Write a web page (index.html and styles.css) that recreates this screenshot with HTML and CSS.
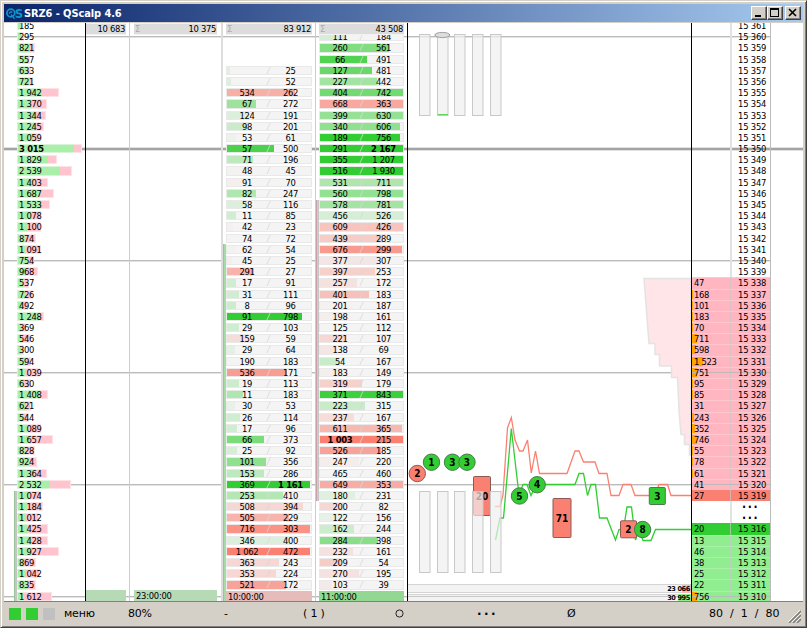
FILE: index.html
```html
<!DOCTYPE html>
<html lang="ru">
<head>
    <meta charset="UTF-8">
    <title>SRZ6 - QScalp 4.6</title>
    <link rel="stylesheet" href="styles.css">
</head>
<body>
    <div class="window">
        <div class="titlebar">
            <svg class="logo" width="17" height="15" viewBox="0 0 17 15">
                <circle cx="4.8" cy="7" r="3.9" fill="none" stroke="#0f96c8" stroke-width="1.7"/>
                <path d="M3 7.5 L5 5.5 L6.3 6.5 M5 8.5 L8.6 12.8" fill="none" stroke="#0f96c8" stroke-width="1.3"/>
                <text x="8.8" y="12" class="logo-text">S</text>
            </svg>
            <span class="title">SRZ6 - QScalp 4.6</span>
            <div class="buttons">
                <div class="btn"><svg width="14" height="12"><rect x="3" y="8" width="6" height="2"/></svg></div>
                <div class="btn"><svg width="14" height="12"><path d="M2 1h9v9h-9z M3 3v6h7v-6z" fill-rule="evenodd"/></svg></div>
                <div class="btn btn-close"><svg width="14" height="12"><path d="M3 2l7 7M10 2l-7 7" stroke="#000" stroke-width="1.6"/></svg></div>
            </div>
        </div>

        <div class="content">
            <div class="volumes"><div class="trend trend-volumes"></div><div class="rows" id="volumes"></div></div>
            <div class="cluster cluster-cut">
                <div class="head">10 683</div>
                <div class="foot foot-pale"></div>
            </div>
            <div class="cluster cluster-a">
                <div class="head"><i>Σ</i>10 375</div>
                <div class="foot foot-pale">23:00:00</div>
            </div>
            <div class="cluster cluster-b">
                <div class="trend trend-b"></div>
                <div class="head"><i>Σ</i>83 912</div>
                <div class="rows" id="clusterB"></div>
                <div class="foot foot-red">10:00:00</div>
            </div>
            <div class="cluster cluster-c">
                <div class="trend trend-c"></div>
                <div class="head"><i>Σ</i>43 508</div>
                <div class="rows" id="clusterC"></div>
                <div class="foot foot-green">11:00:00</div>
            </div>
            <div class="chart">
                <svg width="283" height="578" viewBox="408 23 283 578">
                    <!-- cumulative ask depth -->
                    <path class="depth" d="M691 278.5H644L645.5 298L648 331L649 343.5H655V354.5H659.5V366H671.5V377.5H677.5L679 410L680 423L681 434.5H684.5V444.5H689.5V455H691Z"/>
                    <!-- total volumes -->
                    <rect class="total" x="407" y="584.5" width="285" height="8"/>
                    <rect class="total" x="407" y="594.5" width="285" height="8"/>
                    <path d="M408 596.5H691" stroke="#c8c8c8"/>
                    <rect x="682" y="585" width="9" height="8" fill="#ffb6c1"/>
                    <rect x="678" y="594" width="13" height="7" fill="#90ee90"/>
                    <text class="sum" x="690" y="591.3">23 066</text>
                    <text class="sum" x="690" y="600.3">30 995</text>

                    <polyline class="ask" points="495,506.5 500,506.5 503,495 507.5,428 511.3,417.5 515,440 519.5,451 523,451 527.5,440 531.3,473 535.5,451 539.5,473.5 567,473.5 575,451 579,451 583.5,462 595,462 599,473.5 607,473.5 611,495.5 619,495.5 623,484.5 631,484.5 635,495.5 655,495.5 659,484.5 667.5,484.5 671,495.5 691,495.5"/>
                    <polyline class="bid" points="495.5,540 500,518 503.5,518 511.3,428.5 519,495 523,484.5 527,484.5 531,495.5 536,484.5 575,484.5 579,473.5 583.5,473.5 587.5,495.5 591,484.5 595.5,484.5 599.5,518 607,518 615.5,540 619,529.5 623.5,529 627,507 631.5,507 635.5,540 639,529.5 643,540.5 651,540.5 655.5,529.5 691,529.5"/>
                    <g id="trades"></g>

                    <g id="gauges"></g>
                    <path d="M438 114.5H448" stroke="#5fd35f"/>
                    <ellipse cx="442.3" cy="35" rx="7.5" ry="2.6" fill="#ddd" stroke="#a0a0a0"/>
                </svg>
            </div>
            <div class="book"><div class="rows" id="book"></div></div>
        </div>

        <div class="statusbar">
            <div class="lights"><b class="on"></b><b class="on"></b><b></b></div>
            <span class="st-menu">меню</span>
            <span class="st-zoom">80%</span>
            <span class="st-dash">-</span>
            <span class="st-one">( 1 )</span>
            <span class="st-ring"><svg width="9" height="9"><circle cx="4.5" cy="4.5" r="3.6" fill="none" stroke="#222"/></svg></span>
            <span class="st-dots">···</span>
            <span class="st-avg">Ø</span>
            <span class="st-pos">80 &nbsp;/ &nbsp;1 &nbsp;/ &nbsp;80</span>
            <svg class="grip" width="13" height="13">
                <path d="M1 13L13 1M5 13L13 5M9 13L13 9" stroke="#808080" stroke-width="1.6"/>
                <path d="M0 12L12 0M4 12L13 3M8 12L13 7" stroke="#fff" stroke-width=".8"/>
            </svg>
        </div>
    </div>
    <script src="script.js"></script>
</body>
</html>
```
FILE: styles.css
```css
* {
    box-sizing: border-box;
}
body {
    margin: 0;
    font-family: "DejaVu Sans Condensed", "DejaVu Sans", sans-serif;
    font-stretch: condensed;
    font-size: 9.33px;
    letter-spacing: -0.3px;
    color: #000;
    background: #d4d0c8;
}
.window {
    width: 807px;
    height: 628px;
    padding: 2px;
    display: flex;
    flex-direction: column;
    background: #d4d0c8;
    border: 1px solid;
    border-color: #d4d0c8 #404040 #404040 #d4d0c8;
    box-shadow: inset 1px 1px #fff, inset -1px -1px #808080;
    overflow: hidden;
}

/* title bar */
.titlebar {
    height: 18px;
    margin: 1px 1px 1px 1px;
    display: flex;
    align-items: center;
    padding: 0 2px;
    background: linear-gradient(to right, #0a246a, #a6caf0);
    flex: none;
}
.logo-text {
    font: bold 13px "DejaVu Sans Condensed", sans-serif;
    font-stretch: condensed;
    fill: #0f96c8;
    letter-spacing: 0;
}
.title {
    margin-left: 1px;
    flex: 1;
    color: #fff;
    font-size: 11px;
    font-weight: bold;
    letter-spacing: -0.1px;
}
.buttons {
    display: flex;
}
.btn {
    width: 16px;
    height: 14px;
    background: #d4d0c8;
    border: 1px solid;
    border-color: #fff #404040 #404040 #fff;
    box-shadow: inset -1px -1px #808080;
}
.btn svg {
    display: block;
}
.btn-close {
    margin-left: 2px;
}

/* main area, a grid line every 10 ticks */
.content {
    height: 578px;
    margin: 0 1px;
    display: flex;
    flex: none;
    overflow: hidden;
    background-color: #fff;
    background-image:
        linear-gradient(#e2e2e2 1px, #a4a4a4 1px, #a4a4a4 3px, #e2e2e2 3px),
        repeating-linear-gradient(transparent 0, transparent 13px, #bbb 13px, #bbb 14px, #e4e4e4 14px, #e4e4e4 15px, transparent 15px, transparent 112px);
    background-size: 100% 4px, 767px 100%;
    background-position: 0 124px, 0 0;
    background-repeat: no-repeat;
}
.rows {
    margin-top: -3px;
}
.row {
    height: 11.2px;
    line-height: 11px;
    white-space: nowrap;
}

/* volume profile */
.volumes {
    width: 82px;
    display: flex;
    position: relative;
    border-right: 1px solid #000;
}
.volumes .rows {
    padding-left: 13px;
}
.volumes .row {
    display: flex;
    position: relative;
    padding: 1px 0;
}
.volumes .green,
.volumes .pink {
    background: #a9eea9;
    border: solid #d6f5d6;
    border-width: 1px 0 1px 1px;
}
.volumes .pink {
    background: #ffc4ce;
    border-color: #ffe2e6;
    border-width: 1px 1px 1px 0;
}
.volumes .row span {
    position: absolute;
    left: 2px;
    top: 0;
}
.volumes .strong {
    font-weight: bold;
}
.trend {
    position: absolute;
    width: 3px;
    background: #a5dba5;
    border-left: 1px solid #9cc49c;
    border-right: 1px solid #c5c5c5;
}
.trend-volumes {
    left: 10px;
    top: 468px;
    bottom: 0;
}
.trend-b {
    left: 0;
    top: 221px;
    bottom: 0;
}
.trend-c {
    left: 0;
    top: 177px;
    height: 301px;
    background: #ffb6c1;
    border-left-color: #c9a0a8;
}

/* clusters */
.cluster {
    height: 578px;
    position: relative;
    display: flex;
    flex-direction: column;
    overflow: hidden;
    border-right: 1px solid #ccc;
}
.cluster-cut {
    width: 44px;
    padding-right: 3px;
}
.cluster-a {
    width: 93px;
    padding: 0 4px 0 4px;
    border-right: 2px solid #ddd;
}
.cluster-b {
    width: 93px;
    padding: 0 3px 0 3px;
}
.cluster-c {
    width: 92px;
    padding: 0 3px 0 3px;
    border-right-color: #000;
}
.head {
    position: relative;
    z-index: 1;
    height: 12px;
    flex: none;
    background: #dcdcdc;
    border: solid #f2f2f2;
    border-width: 1px 0;
    padding: 0 1px;
    line-height: 10px;
    text-align: right;
}
.head i {
    float: left;
    font-style: normal;
    color: #aaa;
}
.cluster .rows {
    margin-top: -15px;
    flex: none;
    height: 571px;
}
.foot {
    position: relative;
    height: 11px;
    margin-top: auto;
    flex: none;
    line-height: 11px;
    padding-left: 2px;
    letter-spacing: -0.25px;
}
.cluster-b .foot,
.cluster-c .foot {
    margin-top: 0;
}
.foot-pale {
    background: #b6dab6;
}
.foot-red {
    background: #e6bcba;
}
.foot-green {
    background: #92d892;
}
.cell {
    height: 11.2px;
    padding: 1px 0;
    position: relative;
}
.cell-box {
    height: 100%;
    background: #f4f4f4;
    border: 1px solid #e9e9e9;
}
.cell-fill {
    height: 100%;
}
.cell-text {
    position: absolute;
    top: 0;
    left: 0;
    width: 85px;
    line-height: 11px;
    text-align: center;
}
.cell-text b,
.cell-text span {
    float: left;
    width: 42px;
}
.cell-text :last-child {
    margin-left: 2px;
    width: 41px;
}
.cell-text::before {
    content: "";
    position: absolute;
    left: 42px;
    top: 2px;
    height: 7px;
    width: 1px;
    background: rgba(215, 215, 215, 0.8);
    transform: skewX(-25deg);
}

/* ticks chart */
.chart {
    width: 284px;
    border-right: 1px solid #000;
}
.chart svg {
    display: block;
}
.depth {
    fill: #ffe4e8;
    stroke: #e3e3e3;
    stroke-width: 1.5;
}
.total {
    fill: #f3f3f3;
    stroke: #d4d4d4;
}
.sum {
    font: bold 6.6px "DejaVu Sans", sans-serif;
    text-anchor: end;
    letter-spacing: -0.4px;
}
.ask,
.bid {
    fill: none;
    stroke: #fa8072;
    stroke-width: 1.3;
}
.bid {
    stroke: #32cd32;
}
.trade {
    fill: #32cd32;
    stroke: #4a7a4a;
}
.trade.sell {
    fill: #fa8072;
    stroke: #8a5a55;
}
.trade-text {
    font-size: 10px;
    font-weight: bold;
    text-anchor: middle;
    letter-spacing: 0;
}
.gauge {
    fill: rgba(240, 240, 240, 0.7);
    stroke: #c8c8c8;
}

/* order book */
.book {
    width: 79px;
    border-right: 1px solid #bbb;
    background: linear-gradient(#e2e2e2, #e2e2e2) 38px 0 / 2px 100% no-repeat;
}
.book .row {
    display: flex;
    position: relative;
    border-top: 1px solid transparent;
    line-height: 10px;
}
.book .ask-row {
    background: #ffb6c1;
    border-color: #ffc8d0;
}
.book .bid-row {
    background: #90ee90;
    border-color: #a8f0a8;
}
.book .best-ask {
    background: #fa8072;
    border-color: #fa8072;
}
.book .best-bid {
    background: #32cd32;
    border-color: #32cd32;
}
.book .ask-row::before,
.book .bid-row::before {
    content: "";
    position: absolute;
    left: 38px;
    top: -1px;
    bottom: 0;
    width: 1px;
    background: rgba(200, 200, 200, 0.7);
}
.book .round::after {
    content: "";
    position: absolute;
    left: 0;
    right: 0;
    top: 4px;
    height: 1px;
    background: rgba(185, 185, 185, 0.9);
}
.book .bar {
    position: absolute;
    left: 0;
    top: 0;
    height: 9px;
    background: #ffa500;
}
.book .qty {
    position: relative;
    z-index: 1;
    width: 46px;
    padding-left: 2px;
}
.book .price {
    position: relative;
    z-index: 1;
    letter-spacing: -0.2px;
}
.book .dots {
    font-size: 12px;
    font-weight: bold;
    letter-spacing: 1.6px;
    padding-left: 4px;
}

/* status bar */
.statusbar {
    height: 24px;
    margin: 0 1px;
    display: flex;
    align-items: center;
    position: relative;
    border-top: 1px solid #808080;
    font-family: "DejaVu Sans", sans-serif;
    font-stretch: normal;
    font-size: 11px;
    letter-spacing: -0.2px;
    white-space: nowrap;
    flex: none;
}
.statusbar svg {
    display: block;
}
.lights {
    display: flex;
    gap: 5px;
    margin-left: 5px;
    width: 55px;
}
.lights b {
    width: 12px;
    height: 12px;
    background: #c0c0c0;
}
.lights .on {
    background: #32cd32;
}
.st-menu {
    width: 64px;
}
.st-zoom {
    width: 96px;
}
.st-dash {
    width: 79px;
}
.st-one {
    width: 92px;
}
.st-ring {
    width: 82px;
}
.st-dots {
    width: 90px;
    font-size: 12px;
    font-weight: bold;
    letter-spacing: 2.5px;
}
.st-avg {
    width: 142px;
}
.st-pos {
    letter-spacing: 0;
}
.grip {
    position: absolute;
    right: 2px;
    bottom: 2px;
}
```
FILE: script.js
```js
const TOP = 361;
const NB = "\u00a0";

function fmt(n) {
    return String(n).replace(/(\d)(\d{3})$/, "$1 $2");
}

// [volume, width of the buy part in px]
const volumes = [
    [185, 3], [295, 4], [821, 12], [557, 10], [633, 10], [721, 11], [1942, 23], [1370, 14], [1344, 18],
    [1245, 17], [1059, 16], [3015, 56], [1829, 30], [2539, 42], [1403, 16], [1687, 21], [1533, 23],
    [1078, 13], [1100, 9], [874, 7], [1091, 7], [754, 9], [968, 7], [537, 5], [726, 7], [492, 6],
    [1248, 22], [369, 4], [546, 3], [300, 3], [594, 8], [1039, 7], [630, 6], [1408, 22], [621, 8],
    [544, 5], [1089, 9], [1657, 12], [828, 7], [924, 12], [1364, 15], [2532, 32], [1074, 12],
    [1184, 9], [1012, 8], [1425, 9], [1428, 14], [1927, 14], [869, 6], [1042, 8], [835, 9], [1612, 5]
];

document.getElementById("volumes").innerHTML = volumes.map(([v, g]) => {
    const total = Math.round(v * 0.0211);
    return `<div class="row"><div class="green" style="width:${g + 1}px"></div>` +
        `<div class="pink" style="width:${Math.max(total - g, 1)}px"></div>` +
        `<span class="${v > 3000 ? "strong" : ""}">${fmt(v)}</span></div>`;
}).join("");

// [sell, buy, alpha, width]; negative alpha is red
const clusterB = [
    ["", 25, .1, 3], ["", 52, .12, 4], [534, 262, -.6, 68], [67, 272, .45, 29], [124, 191, .12, 22],
    [98, 201, .22, 21], [53, 61, .03, 9], [57, 500, .88, 47], [71, 196, .28, 26], [48, 45, -.02, 26],
    [91, 70, -.05, 20], [82, 247, .35, 29], [58, 116, .12, 20], [11, 85, .18, 9], [42, 23, -.03, 6],
    [74, 72, 0, 0], [62, 54, -.02, 9], [45, 25, -.05, 5], [291, 27, -.55, 27], [17, 91, .18, 9],
    [31, 111, .18, 12], [8, 96, .2, 9], [91, 798, 1, 75], [29, 103, .18, 12], [159, 59, -.2, 21],
    [29, 64, .08, 8], [190, 183, 0, 0], [536, 171, -.75, 60], [19, 113, .2, 12], [11, 183, .35, 16],
    [30, 53, .06, 8], [26, 114, .18, 13], [17, 96, .18, 10], [66, 373, .62, 37], [25, 92, .15, 10],
    [101, 356, .52, 39], [153, 286, .28, 37], [369, 1161, 1, 85], [253, 410, .32, 56],
    [508, 394, -.25, 76], [505, 229, -.55, 62], [716, 303, -.85, 85], [346, 400, .12, 63],
    [1062, 472, -1, 85], [363, 243, -.25, 52], [353, 224, -.25, 49], [521, 172, -.7, 59]
];

const clusterC = [
    [111, 184, .15, 26], [260, 561, .6, 69], [66, 491, .85, 47], [127, 481, .72, 52], [227, 442, .42, 57],
    [404, 742, .68, 85], [668, 363, -.65, 85], [399, 630, .48, 85], [340, 606, .52, 80], [189, 756, 1, 80],
    [291, 2167, 1, 85], [355, 1207, 1, 85], [516, 1930, 1, 85], [531, 711, .36, 85], [560, 798, .5, 85],
    [578, 781, .42, 85], [456, 526, .15, 83], [609, 426, -.42, 85], [439, 289, -.35, 62],
    [676, 299, -.78, 82], [377, 307, -.12, 58], [397, 253, -.3, 55], [257, 172, -.15, 37],
    [401, 183, -.45, 49], [201, 187, -.02, 33], [198, 161, -.05, 30], [125, 112, 0, 0],
    [221, 107, -.25, 27], [138, 69, -.12, 17], [54, 167, .22, 19], [183, 149, -.05, 28],
    [319, 179, -.3, 42], [371, 843, .95, 85], [223, 315, .22, 45], [237, 167, -.2, 34],
    [611, 365, -.52, 82], [1003, 215, -1, 85], [526, 185, -.7, 61], [247, 220, -.06, 39],
    [465, 460, 0, 0], [649, 353, -.62, 85], [180, 231, .1, 35], [200, 82, -.25, 24], [122, 156, .06, 24],
    [162, 244, .2, 34], [284, 398, .55, 58], [232, 161, -.15, 33], [209, 54, -.35, 21],
    [270, 195, -.15, 39], [103, 39, -.08, 12]
];

const bold = [1161, 2167, 1003];

function drawCluster(id, firstPrice, cells) {
    const num = n => bold.includes(n) ? `<b>${fmt(n)}</b>` : `<span>${n === "" ? NB : fmt(n)}</span>`;
    let html = '<div class="row"></div>'.repeat(TOP - firstPrice);
    for (const [sell, buy, a, w] of cells) {
        const rgb = a < 0 ? "250,128,114" : "50,205,50";
        html += `<div class="cell"><div class="cell-box">` +
            `<div class="cell-fill" style="width:${Math.min(w, 83)}px;background:rgba(${rgb},${Math.abs(a)})"></div></div>` +
            `<div class="cell-text">${num(sell)}${num(buy)}</div></div>`;
    }
    document.getElementById(id).innerHTML = html;
}
drawCluster("clusterB", 357, clusterB);
drawCluster("clusterC", 360, clusterC);

// order book, quantities from 15 338 down
const asks = [47, 168, 101, 183, 70, 711, 598, 1523, 751, 95, 85, 31, 243, 352, 746, 55, 78, 61, 41, 27];
const bids = [20, 13, 46, 38, 25, 22, 756];
let book = "";
for (let p = TOP; p >= 310; p--) {
    let cls = "row", qty = "";
    if (p <= 338 && p >= 319) {
        cls += " ask-row";
        qty = asks[338 - p];
    } else if (p <= 316) {
        cls += " bid-row";
        qty = bids[316 - p];
    }
    if (p === 319) cls += " best-ask";
    if (p === 316) cls += " best-bid";
    if (qty && p % 10 === 0) cls += " round";
    const price = p === 318 || p === 317 ? '<span class="price dots">···</span>' : `<span class="price">15 ${p}</span>`;
    book += `<div class="${cls}"><div class="bar" style="width:${qty > 50 ? Math.max(qty * 0.0072, 1) : 0}px"></div>` +
        `<span class="qty">${qty ? fmt(qty) : ""}</span>${price}</div>`;
}
document.getElementById("book").innerHTML = book;

// trades on the chart: circle [x, y] or box [x, y, w, h]
const trades = [
    { n: 2, x: 417.3, y: 473.5, sell: true },
    { n: 1, x: 431.5, y: 462.2 },
    { n: 3, x: 452.5, y: 462.2 },
    { n: 3, x: 467, y: 462.2 },
    { n: 20, x: 482, y: 496, w: 17, h: 39, sell: true },
    { n: 5, x: 519.5, y: 496 },
    { n: 4, x: 537.2, y: 484.7 },
    { n: 71, x: 562, y: 518, w: 18, h: 39, sell: true },
    { n: 2, x: 628.5, y: 529.3, w: 16, h: 17, sell: true },
    { n: 8, x: 642.6, y: 529.5 },
    { n: 3, x: 657.3, y: 496, w: 16, h: 17 }
];
document.getElementById("trades").innerHTML = trades.map(t => {
    const cls = t.sell ? "trade sell" : "trade";
    const shape = t.w
        ? `<rect class="${cls}" x="${t.x - t.w / 2}" y="${t.y - t.h / 2}" width="${t.w}" height="${t.h}" rx="1"/>`
        : `<circle class="${cls}" cx="${t.x}" cy="${t.y}" r="8.2"/>`;
    return shape + `<text class="trade-text" x="${t.x}" y="${t.y + 3.7}">${t.n}</text>`;
}).join("");

document.getElementById("gauges").innerHTML = [34.5, 491.5].map(y =>
    [419.5, 437.5, 454.5, 472.5, 490.5].map(x =>
        `<rect class="gauge" x="${x}" y="${y}" width="10.5" height="81"/>`).join("")
).join("");
```
